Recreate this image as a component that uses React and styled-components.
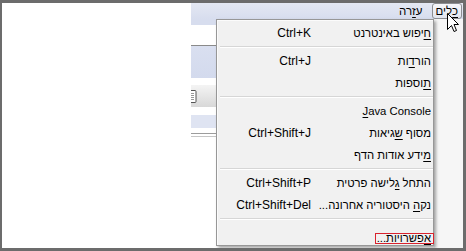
import React from 'react';
import styled, { createGlobalStyle } from 'styled-components';

const GlobalStyle = createGlobalStyle`
  body {
    margin: 0;
    background: #fff;
    font-family: "Liberation Sans", "DejaVu Sans", sans-serif;
    font-size: 12px;
    color: #000;
  }
`;

const Frame = styled.div`
  position: relative;
  width: 466px;
  height: 251px;
  box-sizing: border-box;
  border-style: solid;
  border-color: #6c6c6c;
  border-width: 3px 3px 3px 2px;
  background: #fff;
  display: flex;
  overflow: hidden;
`;

const Blank = styled.div`
  width: 189px;
  flex: none;
  background: #fff;
`;

const Chrome = styled.div`
  flex: 1;
  display: flex;
  flex-direction: column;
`;

const MenuBar = styled.div`
  height: 16px;
  flex: none;
  display: flex;
  direction: rtl;
  padding-right: 1px;
  background: linear-gradient(#e4e8f3, #d7ddee);
`;

const MenuTitle = styled.div`
  box-sizing: border-box;
  height: 16px;
  line-height: 15px;
  font-size: 11.5px;
  white-space: nowrap;
  border: 1px solid ${(p) => (p.$active ? '#8c8e92' : 'transparent')};
  border-radius: 3px;
  padding: ${(p) => (p.$active ? '0 3px' : '0 8px')};
  background: ${(p) => (p.$active ? 'linear-gradient(#f6f7fa, #e1e5ee)' : 'none')};
`;

const U = styled.span`
  text-decoration: underline;
  text-underline-offset: 2px;
`;

const Body = styled.div`
  flex: 1;
  display: flex;
`;

const Bands = styled.div`
  flex: 1;
  display: flex;
  flex-direction: column;
`;

const Band = styled.div`
  height: ${(p) => p.$h}px;
  flex: none;
  background: ${(p) => p.$bg};
  display: flex;
  align-items: center;
`;

const Side = styled.div`
  width: 29px;
  flex: none;
  background: #f6f6f6;
`;

const Menu = styled.div`
  position: absolute;
  left: 214px;
  top: 16px;
  width: 218px;
  box-sizing: border-box;
  padding: 2px 2px 1px 0;
  border: 1px solid #979797;
  background: #f1f1f1;
  box-shadow: 2px 2px 3px rgba(0, 0, 0, 0.35), inset 1px 1px 0 #fbfbfb;
  direction: rtl;
`;

const Item = styled.div`
  display: grid;
  grid-template-columns: 119px 1fr;
  column-gap: 1px;
  height: 22px;
  align-items: ${(p) => (p.$marked ? 'end' : 'center')};
  white-space: nowrap;
`;

const Label = styled.div`
  text-align: right;
  font-size: 11.3px;
  line-height: 14px;
`;

const Marked = styled.div`
  justify-self: start;
  box-sizing: border-box;
  height: 11px;
  line-height: 9px;
  font-size: 11.3px;
  margin-right: -3px;
  padding: 0 2px 0 1px;
  border: 1px solid #d9232e;
`;

const Shortcut = styled.div`
  direction: ltr;
  text-align: right;
  line-height: 14px;
`;

const Separator = styled.div`
  height: 0;
  margin: 2px -2px 2px 0;
  margin-left: 3px;
  border-top: 1px solid #d6d6d6;
  border-bottom: 1px solid #ffffff;
`;

const Cursor = styled.svg`
  position: absolute;
  left: 445px;
  top: 10px;
`;

const mn = (text, i) => (
  <>
    {text.slice(0, i)}
    <U>{text[i]}</U>
    {text.slice(i + 1)}
  </>
);

const items = [
  { text: 'חיפוש באינטרנט', k: 0, sc: 'Ctrl+K' },
  'sep',
  { text: 'הורדות', k: 3, sc: 'Ctrl+J' },
  { text: 'תוספות', k: 0 },
  'sep',
  { text: 'Java Console', k: 0 },
  { text: 'מסוף שגיאות', k: 5, sc: 'Ctrl+Shift+J' },
  { text: 'מידע אודות הדף', k: 0 },
  'sep',
  { text: 'התחל גלישה פרטית', k: 5, sc: 'Ctrl+Shift+P' },
  { text: 'נקה היסטוריה אחרונה...', k: 2, sc: 'Ctrl+Shift+Del' },
  'sep',
  { text: 'אפשרויות...', k: 0, marked: true },
];

const bands = [
  { h: 6, bg: '#d7ddee' },
  { h: 20, bg: '#ffffff' },
  { h: 1, bg: '#8a8a8a' },
  { h: 32, bg: 'linear-gradient(#d9dff0, #d3daed)' },
  { h: 7, bg: '#ffffff' },
  { h: 22, bg: 'linear-gradient(#f4f4f4, #d8d8d8)', icon: true },
  { h: 8, bg: '#ffffff' },
  { h: 13, bg: '#dfe4f2' },
  { h: 5, bg: '#ffffff' },
  { h: 1, bg: '#9c9c9c' },
  { h: 2, bg: '#ffffff' },
  { h: 1, bg: '#c6c6c6' },
];

const PageIcon = () => (
  <svg width="6" height="13" viewBox="0 0 6 13">
    <rect x="-4" y="0.5" width="9" height="12" rx="1" fill="#fff" stroke="#555" />
    <path d="M0 3.5h3M0 5.5h3M0 7.5h3M0 9.5h3" stroke="#999" />
  </svg>
);

export default function App() {
  return (
    <>
      <GlobalStyle />
      <Frame>
        <Blank />
        <Chrome>
          <MenuBar>
            <MenuTitle $active>{mn('כלים', 0)}</MenuTitle>
            <MenuTitle>{mn('עזרה', 1)}</MenuTitle>
          </MenuBar>
          <Body>
            <Bands>
              {bands.map((b, i) => (
                <Band key={i} $h={b.h} $bg={b.bg}>
                  {b.icon && <PageIcon />}
                </Band>
              ))}
            </Bands>
            <Side />
          </Body>
        </Chrome>

        <Menu>
          {items.map((it, i) =>
            it === 'sep' ? (
              <Separator key={i} />
            ) : (
              <Item key={i} $marked={it.marked}>
                {it.marked ? (
                  <Marked>{mn(it.text, it.k)}</Marked>
                ) : (
                  <Label>{mn(it.text, it.k)}</Label>
                )}
                <Shortcut>{it.sc}</Shortcut>
              </Item>
            )
          )}
        </Menu>

        <Cursor width="13" height="20" viewBox="0 0 13 20">
          <polygon
            points="0.5,0.5 0.5,16.5 4.5,12.5 7,18.5 9.5,17.5 7,11.5 11.5,11.5"
            fill="#fff"
            stroke="#000"
            strokeLinejoin="miter"
          />
        </Cursor>
      </Frame>
    </>
  );
}
